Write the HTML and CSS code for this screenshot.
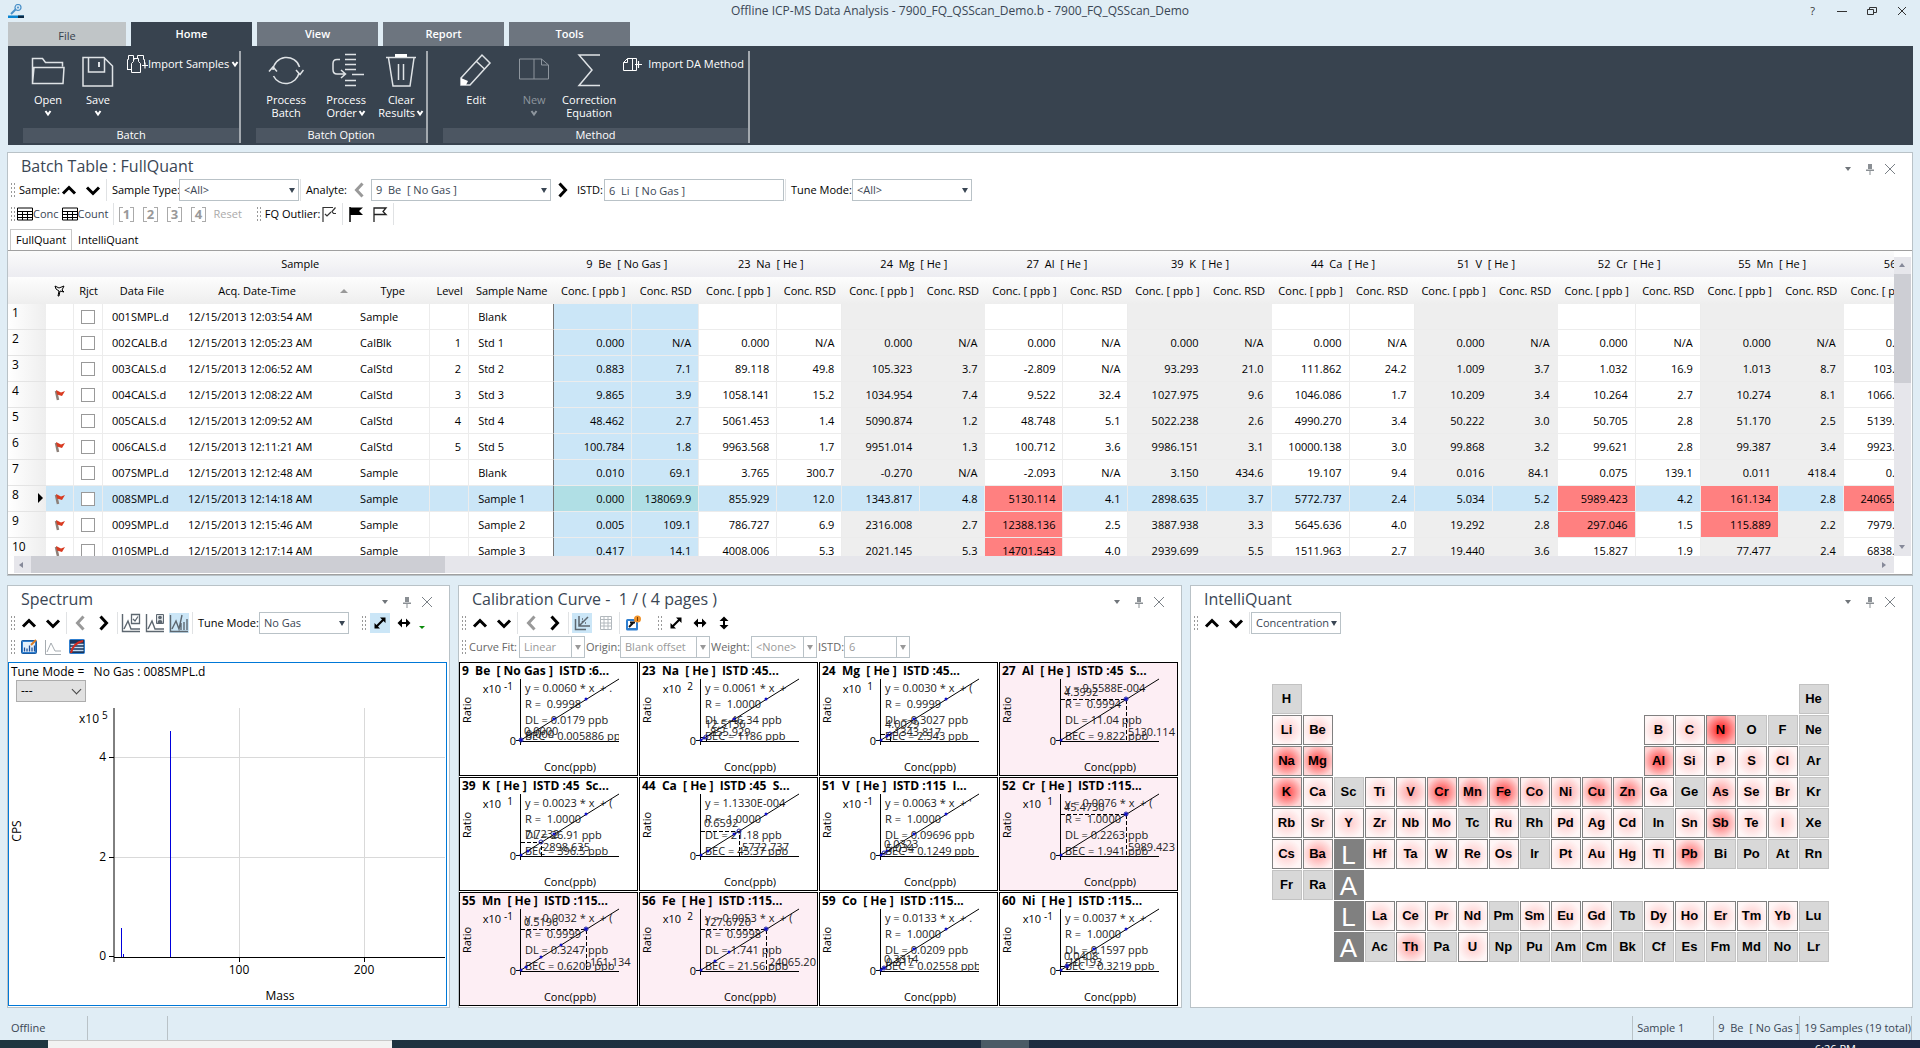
FILE: index.html
```html
<!DOCTYPE html>
<html lang="en">
<head>
  <meta charset="UTF-8">
  <title>Offline ICP-MS Data Analysis - 7900_FQ_QSScan_Demo.b</title>
  <link rel="stylesheet" href="styles.css">
</head>
<body>

<svg class="sprite" aria-hidden="true">
  <symbol id="up" viewBox="0 0 16 16"><path d="M2 11.5 8 5.5l6 6" fill="none" stroke="currentColor" stroke-width="3"/></symbol>
  <symbol id="down" viewBox="0 0 16 16"><path d="M2 5.5l6 6 6-6" fill="none" stroke="currentColor" stroke-width="3"/></symbol>
  <symbol id="left" viewBox="0 0 16 16"><path d="M11.500 1.500 5.500 8l6 6.500" fill="none" stroke="currentColor" stroke-width="3"/></symbol>
  <symbol id="right" viewBox="0 0 16 16"><path d="M4.500 1.500 10.500 8l-6 6.500" fill="none" stroke="currentColor" stroke-width="3"/></symbol>
  <symbol id="chev" viewBox="0 0 8 8"><path d="M1.500 2 4 5.500 6.500 2" fill="none" stroke="currentColor" stroke-width="2"/></symbol>
  <symbol id="pin" viewBox="0 0 10 12"><path d="M3 1h4v5H3zM1 6.500h8v1.500H1zM4.500 8h1v4h-1z" fill="#8a8f94"/></symbol>
  <symbol id="close" viewBox="0 0 12 12"><path d="M1 1l10 10M11 1 1 11" fill="none" stroke="#7a8086"/></symbol>
  <symbol id="tri" viewBox="0 0 8 6"><path d="M1 1h6L4 5z" fill="#70757a"/></symbol>
  <symbol id="grid" viewBox="0 0 16 14"><path d="M.5 1h15v12H.5zM0 4.500h16M0 7.500h16M0 10.500h16M5.500 4v9M10.500 4v9" fill="none" stroke="currentColor"/></symbol>
  <symbol id="diag" viewBox="0 0 16 16"><path d="M8 2.500h5.500V8zM2.500 8v5.500H8z"/><path d="M4.500 11.500l7-7" stroke="#000" stroke-width="2.200"/></symbol>
  <symbol id="horz" viewBox="0 0 16 16"><path d="M6 3.500v9L1.500 8zM10 3.500v9L14.500 8z"/><path d="M4 8h8" stroke="#000" stroke-width="2"/></symbol>
  <symbol id="vert" viewBox="0 0 16 16"><path d="M3.500 6h9L8 1.500zM3.500 10h9L8 14.500z"/><path d="M8 4v8" stroke="#000" stroke-width="2"/></symbol>
  <symbol id="flag" viewBox="0 0 16 16"><path d="M2 16V2h12l-3 3.500 3 3H2" fill="none" stroke="#222" stroke-width="1.300"/></symbol>
  <symbol id="flagfull" viewBox="0 0 16 16"><path d="M2 1.500h13l-4 3.500 4 4H2z"/><path d="M2 16V1" stroke="#000" stroke-width="1.500"/></symbol>
  <symbol id="flagcheck" viewBox="0 0 16 16"><path d="M2 16V1.500h10M4 8l2 2 4-4M14.500 1.500l-3.500 4 1.500 2H15" fill="none" stroke="#333" stroke-width="1.200"/></symbol>
  <symbol id="redflag" viewBox="0 0 12 12"><path d="M2 2l2 9" stroke="#8c7f78" stroke-width="2.500"/><path d="M2 1l5 2.500L11 2 8 7 3 5.500z" fill="#d93a20"/></symbol>
  <symbol id="peakcheck" viewBox="0 0 20 20"><path d="M1.500 1v17.500H19M3 16l4-8 3 8h9" fill="none" stroke="#5d6770" stroke-width="1.400"/><path d="M10.500 1.500h8v9h-8zM12 6l2 2 3-4.500" fill="#fff" stroke="#5d6770" stroke-width="1.300"/></symbol>
  <symbol id="peakuser" viewBox="0 0 20 20"><path d="M1.500 1v17.500H19M3 16l4-8 3 8h9" fill="none" stroke="#5d6770" stroke-width="1.400"/><path d="M11.500 1.500h7v9h-7z" fill="#dfe3e6" stroke="#5d6770"/><circle cx="15" cy="4.500" r="1.800" fill="#5d6770"/><path d="M12.500 10q0-3 2.500-3t2.500 3z" fill="#5d6770"/></symbol>
  <symbol id="peakbars" viewBox="0 0 20 20"><path d="M1.500 2v16.500H19M3 16l4-8 3 8L13 2M12 17v-7M15 17V9M18 17V6" fill="none" stroke="#5d6770" stroke-width="1.400"/></symbol>
</svg>

<header class="titlebar">
  <svg class="app-icon" viewBox="0 0 16 15"><path d="M0 11.500h16v2.500H0z" fill="#0a85d1"/><path d="M10 11.500h6v2.500h-6z" fill="#0b2a45"/><path d="M3 10l5-5" stroke="#4a90c8" stroke-width="2"/><circle cx="10" cy="3.500" r="3" fill="#d5e8f5" stroke="#4a90c8" stroke-width="1.200"/><circle cx="10" cy="3.500" r="1" fill="#4a90c8"/></svg>
  <h1>Offline ICP-MS Data Analysis - 7900_FQ_QSScan_Demo.b - 7900_FQ_QSScan_Demo</h1>
  <div class="window-buttons">
    <button aria-label="Help">?</button>
    <button aria-label="Minimize"><svg viewBox="0 0 10 10"><path d="M0 5.500h10" stroke="#333"/></svg></button>
    <button aria-label="Restore"><svg viewBox="0 0 10 10"><path d="M.5 3.500h6v5h-6zM2.500 3.500v-2h7v5h-3" fill="none" stroke="#333"/></svg></button>
    <button aria-label="Close"><svg viewBox="0 0 10 10"><path d="M1 1l8 8M9 1 1 9" stroke="#333"/></svg></button>
  </div>
</header>

<nav class="ribbon-tabs">
  <button class="file">File</button>
  <button class="active">Home</button>
  <button>View</button>
  <button>Report</button>
  <button>Tools</button>
</nav>

<section class="ribbon">
  <div class="group">
    <div class="actions">
      <button class="big w50"><svg class="pic" viewBox="0 0 36 36"><path d="M2.500 32.500v-25h10l3 4h17v4M2.500 32.500l1.500-16h30l-1 16z" fill="none" stroke="#dfe3e6" stroke-width="1.500"/></svg><span>Open</span><svg class="chev"><use href="#chev"/></svg></button>
      <button class="big w50"><svg class="pic" viewBox="0 0 36 36"><path d="M3 6.500h21l8.500 8.500v20H3zM8.500 7v14h16V7" fill="none" stroke="#dfe3e6" stroke-width="1.500"/><path d="M19 11v5" stroke="#dfe3e6" stroke-width="2"/></svg><span>Save</span><svg class="chev"><use href="#chev"/></svg></button>
      <button class="small"><svg class="wide" viewBox="0 0 22 18"><path d="M1.500 14.500v-10h1v-4h5v4h1M5.500 17.500v-9l2-2v-3h5v3l2 2v9zM11.500 3.500v-3h6v4h1v5M1 14.500h4" fill="none" stroke="#fff"/><path d="M16 10.500h6M19 7.500v6" stroke="#fff" stroke-width="1.200"/></svg>Import Samples<svg class="chev"><use href="#chev"/></svg></button>
    </div>
    <div class="group-name">Batch</div>
  </div>
  <div class="group">
    <div class="actions">
      <button class="big w60"><svg class="pic" viewBox="0 0 36 36"><path d="M5 19A13.500 13 0 0 1 31.500 16M31 22A13.500 13 0 0 1 5.500 25" fill="none" stroke="#dfe3e6" stroke-width="1.500"/><path d="M1 20.500l4-4.500 4 4.500M28 19l4 4.500 3.500-4.500" fill="none" stroke="#dfe3e6" stroke-width="1.500"/></svg><span>Process<br>Batch</span></button>
      <button class="big w60"><svg class="pic" viewBox="0 0 36 36"><path d="M17 3.500h11M17 8.500h11M17 13.500h11M17 18.500h11M24 23.500h12M17 29.500h11M17 34.500h11" stroke="#dfe3e6" stroke-width="1.500"/><path d="M12 8.500H9q-4 0-4 4v6q0 4.500 4 4.500h8M13 19l4.500 4-4.500 4" fill="none" stroke="#dfe3e6" stroke-width="1.500"/></svg><span>Process<br>Order<svg class="chev"><use href="#chev"/></svg></span></button>
      <button class="big w50"><svg class="pic" viewBox="0 0 36 36"><path d="M3 6.500h30M5.500 7l4.500 28h17L31 7M15.500 13v16M20.500 13v16" fill="none" stroke="#dfe3e6" stroke-width="1.500"/><path d="M12 3h12v3H12z" fill="#fff"/></svg><span>Clear<br>Results<svg class="chev"><use href="#chev"/></svg></span></button>
    </div>
    <div class="group-name">Batch Option</div>
  </div>
  <div class="group">
    <div class="actions">
      <button class="big w66"><svg class="pic" viewBox="0 0 36 36"><path d="M3 27 24 4l8 8-20 22H3zM18 10l8.500 8" fill="none" stroke="#dfe3e6" stroke-width="1.500"/><path d="M3 27l7 3-2 4H3z" fill="#fff"/></svg><span>Edit</span></button>
      <button class="big w50" disabled><svg class="pic" viewBox="0 0 36 36"><path d="M3.500 8h22l7 6v14h-29zM18 8v20M25.500 8v6h7" fill="none" stroke="#8e969e"/></svg><span>New</span><svg class="chev"><use href="#chev"/></svg></button>
      <button class="big w60"><svg class="pic" viewBox="0 0 36 36"><path d="M29 4H8l13 15L8 34.500h21" fill="none" stroke="#dfe3e6" stroke-width="1.500"/></svg><span>Correction<br>Equation</span></button>
      <button class="small"><svg class="wide" viewBox="0 0 22 18"><path d="M5.500 3.500h9v12h-13v-8zM10.500 3v12M5.500 3.500v4h-4" fill="none" stroke="#fff"/><path d="M13 9.500h7M16.500 6v7" stroke="#fff" stroke-width="1.200"/></svg><span>Import DA Method</span></button>
    </div>
    <div class="group-name">Method</div>
  </div>
</section>

<main>
  <section class="panel batch">
    <div class="panel-head">
      <h2>Batch Table : FullQuant</h2>
      <div class="panel-tools"><svg class="t"><use href="#tri"/></svg><svg class="p"><use href="#pin"/></svg><svg class="x"><use href="#close"/></svg></div>
    </div>
    <div class="toolbar">
      <i class="grip"></i><span class="name">Sample:</span>
      <button class="icon" aria-label="Previous sample"><svg><use href="#up"/></svg></button>
      <button class="icon" aria-label="Next sample"><svg><use href="#down"/></svg></button>
      <i class="sep"></i>
      <label for="stype" class="w66">Sample Type:</label>
      <span class="drop w120"><select id="stype"><option>&lt;All&gt;</option></select></span>
      <i class="sep"></i>
      <label for="analyte" class="w40">Analyte:</label>
      <button class="icon dim" aria-label="Previous analyte"><svg><use href="#left"/></svg></button>
      <span class="drop w180"><select id="analyte"><option>9&nbsp; Be&nbsp; [ No Gas ]</option></select></span>
      <button class="icon" aria-label="Next analyte"><svg><use href="#right"/></svg></button>
      <label for="istd" class="w26">ISTD:</label>
      <input id="istd" class="w180" type="text" value="6  Li  [ No Gas ]">
      <i class="sep"></i>
      <label for="tmode" class="w60">Tune Mode:</label>
      <span class="drop w120"><select id="tmode"><option>&lt;All&gt;</option></select></span>
    </div>
    <div class="toolbar">
      <i class="grip"></i>
      <button class="txt"><svg><use href="#grid"/></svg>Conc</button>
      <button class="txt"><svg><use href="#grid"/></svg>Count</button>
      <i class="sep"></i>
      <button class="icon num" disabled>1</button>
      <button class="icon num" disabled>2</button>
      <button class="icon num" disabled>3</button>
      <button class="icon num" disabled>4</button>
      <button class="txt reset" disabled>Reset</button>
      <i class="grip"></i><span class="name">FQ Outlier:</span>
      <button class="icon" aria-label="Outlier setup"><svg><use href="#flagcheck"/></svg></button>
      <i class="sep"></i>
      <button class="icon" aria-label="Next outlier"><svg><use href="#flagfull"/></svg></button>
      <button class="icon" aria-label="Clear outlier"><svg><use href="#flag"/></svg></button>
      <i class="sep"></i>
    </div>
    <div class="tabs"><button class="active">FullQuant</button><button>IntelliQuant</button></div>
    <div class="grid-wrap">
      <div class="grid-view"><table id="batch"></table></div>
      <div class="vscroll"><i class="arr up"></i><i class="thumb"></i><i class="arr down"></i></div>
      <div class="hscroll"><i class="arr left"></i><i class="thumb"></i><i class="arr right"></i></div>
    </div>
  </section>

  <div class="bottom">
    <section class="panel">
      <div class="panel-head">
        <h2>Spectrum</h2>
        <div class="panel-tools"><svg class="t"><use href="#tri"/></svg><svg class="p"><use href="#pin"/></svg><svg class="x"><use href="#close"/></svg></div>
      </div>
      <div class="toolbar">
        <i class="grip"></i>
        <button class="icon" aria-label="Up"><svg><use href="#up"/></svg></button>
        <button class="icon" aria-label="Down"><svg><use href="#down"/></svg></button>
        <i class="sep"></i>
        <button class="icon dim" aria-label="Previous"><svg><use href="#left"/></svg></button>
        <button class="icon" aria-label="Next"><svg><use href="#right"/></svg></button>
        <i class="sep"></i>
        <button class="icon lg" aria-label="Peak check"><svg><use href="#peakcheck"/></svg></button>
        <button class="icon lg" aria-label="Peak label"><svg><use href="#peakuser"/></svg></button>
        <button class="icon lg on" aria-label="Bars"><svg><use href="#peakbars"/></svg></button>
        <i class="sep"></i>
        <label for="smode" class="w60">Tune Mode:</label>
        <span class="drop w90"><select id="smode"><option>No Gas</option></select></span>
        <i class="grip far"></i>
        <button class="icon on" aria-label="Fit both"><svg><use href="#diag"/></svg></button>
        <button class="icon" aria-label="Fit width"><svg><use href="#horz"/></svg></button>
        <i class="more"></i>
      </div>
      <div class="toolbar">
        <i class="grip"></i>
        <button class="icon" aria-label="Edit spectrum"><svg viewBox="0 0 16 16"><rect x=".5" y="1.500" width="15" height="13" rx="1" fill="#2f7fd0" stroke="#1b5aa0"/><path d="M2 3h12v10H2z" fill="#e4f0fb"/><path d="M3.500 12.500v-4M6 12.500v-3M8.500 12.500v-6M11 12.500v-4M13.500 12.500v-6" stroke="#1b4f9a" stroke-width="1.300"/><path d="M10 6l5-5" stroke="#d87b26" stroke-width="2"/></svg></button>
        <button class="icon" aria-label="Peak"><svg viewBox="0 0 16 16"><path d="M.5 1v14.500H16M2 13l4-9 4 8h6" fill="none" stroke="#a5abb0"/></svg></button>
        <button class="icon" aria-label="Overlay"><svg viewBox="0 0 16 16"><rect x=".5" y=".5" width="15" height="14" rx="1" fill="#16365f" stroke="#2f7fd0"/><path d="M1.500 5.500h13M1.500 8.500h13M1.500 11.500h13" stroke="#c8dcf0" stroke-width="1.500"/><path d="M2 14Q4 4 14 2" fill="none" stroke="#d32a1e" stroke-width="2"/></svg></button>
      </div>
      <div class="chart">
        <p>Tune Mode =   No Gas : 008SMPL.d</p>
        <span class="pick"><select aria-label="Isotope"><option>---</option></select></span>
        <svg class="plot" viewBox="9 703 437 302" preserveAspectRatio="xMinYMin meet">
          <path d="M114.500 758.500H445M114.500 858.500H445M239.500 709V962M364.500 709V962" stroke="#d9d9d9"/>
          <path d="M114 709v254M109 758.500h5M109 858.500h5M109 957.500h5M239.500 958v5M364.500 958v5M114 958.500h331" stroke="#000" fill="none"/>
          <path d="M121.500 929v29M123.500 955v3M170.500 732v226" stroke="#00d"/>
          <text x="79" y="724">x10</text><text class="exp" x="102" y="720">5</text>
          <g text-anchor="end"><text x="106" y="762">4</text><text x="106" y="862">2</text><text x="106" y="961">0</text></g>
          <g text-anchor="middle"><text x="239" y="975">100</text><text x="364" y="975">200</text><text x="280" y="1001">Mass</text><text transform="translate(21 832) rotate(-90)">CPS</text></g>
        </svg>
      </div>
    </section>

    <section class="panel">
      <div class="panel-head">
        <h2>Calibration Curve -  1 / ( 4 pages )</h2>
        <div class="panel-tools"><svg class="t"><use href="#tri"/></svg><svg class="p"><use href="#pin"/></svg><svg class="x"><use href="#close"/></svg></div>
      </div>
      <div class="toolbar">
        <i class="grip"></i>
        <button class="icon" aria-label="Up"><svg><use href="#up"/></svg></button>
        <button class="icon" aria-label="Down"><svg><use href="#down"/></svg></button>
        <i class="sep"></i>
        <button class="icon dim" aria-label="Previous page"><svg><use href="#left"/></svg></button>
        <button class="icon" aria-label="Next page"><svg><use href="#right"/></svg></button>
        <i class="sep"></i>
        <button class="icon on" aria-label="Curve"><svg viewBox="0 0 16 16"><path d="M1.500 4v10.500H12M5 1v10h11M5 11l9-9M8 4h1M11 8h1M8 7l1-1" fill="none" stroke="#5d6770" stroke-width="1.500"/></svg></button>
        <button class="icon" aria-label="Table"><svg viewBox="0 0 16 16"><path d="M2.500 1.500h11v13h-11zM2.500 4.500h11M2.500 8h11M2.500 11h11M6 1.500v13M10 1.500v13" fill="none" stroke="#b2b8bd"/></svg></button>
        <i class="sep"></i>
        <button class="icon" aria-label="Apply"><svg viewBox="0 0 16 16"><rect x="1" y="4" width="12" height="11.500" rx="1.500" fill="#2f7fd0"/><path d="M3 6h8v7H3z" fill="#fff"/><path d="M4 12l5-5M5 7.500h5" stroke="#111" stroke-width="1.800"/><circle cx="12.500" cy="4" r="3.500" fill="#f0932b"/><path d="M12.500 2v4" stroke="#7a3c00"/></svg></button>
        <i class="grip far"></i>
        <button class="icon" aria-label="Fit both"><svg><use href="#diag"/></svg></button>
        <button class="icon" aria-label="Fit width"><svg><use href="#horz"/></svg></button>
        <button class="icon" aria-label="Fit height"><svg><use href="#vert"/></svg></button>
      </div>
      <div class="toolbar off">
        <i class="grip"></i>
        <label for="fit" class="w50">Curve Fit:</label><span class="drop w66"><select id="fit" disabled><option>Linear</option></select></span>
        <label for="origin" class="w34">Origin:</label><span class="drop w90"><select id="origin" disabled><option>Blank offset</option></select></span>
        <label for="weight" class="w40">Weight:</label><span class="drop w66"><select id="weight" disabled><option>&lt;None&gt;</option></select></span>
        <label for="cistd" class="w26">ISTD:</label><span class="drop w66"><select id="cistd" disabled><option>6</option></select></span>
      </div>
      <div class="tiles" id="tiles"></div>
    </section>

    <section class="panel">
      <div class="panel-head">
        <h2>IntelliQuant</h2>
        <div class="panel-tools"><svg class="t"><use href="#tri"/></svg><svg class="p"><use href="#pin"/></svg><svg class="x"><use href="#close"/></svg></div>
      </div>
      <div class="toolbar">
        <i class="grip"></i>
        <button class="icon" aria-label="Up"><svg><use href="#up"/></svg></button>
        <button class="icon" aria-label="Down"><svg><use href="#down"/></svg></button>
        <i class="sep"></i>
        <span class="drop w90"><select aria-label="Value shown"><option>Concentration</option></select></span>
      </div>
      <div class="periodic" id="periodic"></div>
    </section>
  </div>
</main>

<footer class="status">
  <span class="cell first">Offline</span><span class="cell gap"></span>
  <span class="cell s1">Sample 1</span><span class="cell s2">9  Be  [ No Gas ]</span><span class="cell s3">19 Samples (19 total)</span>
</footer>
<div class="taskbar"><i class="search"></i><i class="app"></i><span>6:26 PM</span></div>

<script src="script.js"></script>
</body>
</html>
```
FILE: styles.css
```css
* { box-sizing: border-box; }

body {
  margin: 0;
  min-height: 100vh;
  display: flex;
  flex-direction: column;
  background: #e0edf5;
  color: #000;
  font-family: "Open Sans", "Noto Sans", sans-serif;
  font-size: 11px;
  line-height: 14px;
}

button, select, input {
  font: inherit;
  color: inherit;
  margin: 0;
  padding: 0;
  border: 0;
  background: none;
}

h1, h2, p { margin: 0; font-weight: normal; }
.sprite { position: absolute; width: 0; height: 0; }

/* window title */
.titlebar {
  display: grid;
  grid-template-columns: 1fr auto 1fr;
  align-items: center;
  height: 22px;
  padding: 2px 12px;
}
.titlebar h1 { font-size: 12px; color: #3a4654; }
.app-icon { width: 16px; height: 15px; margin-left: -4px; }
.window-buttons { display: flex; justify-content: flex-end; gap: 19px; color: #333; }
.window-buttons button { width: 11px; height: 14px; }
.window-buttons svg { width: 10px; height: 10px; display: block; }

/* ribbon */
.ribbon-tabs { display: flex; gap: 5px; padding: 0 8px; }
.ribbon-tabs button {
  width: 121px;
  height: 24px;
  background: #6d757f;
  color: #fff;
  font-weight: 600;
}
.ribbon-tabs .file { width: 118px; padding-top: 3px; background: #c0c5c7; color: #36414d; font-weight: normal; }
.ribbon-tabs .active { background: #38434f; }

.ribbon {
  display: flex;
  height: 99px;
  margin: 0 7px 0 8px;
  padding: 5px 0 2px;
  background: #38434f;
  color: #fff;
}
.group {
  display: flex;
  flex-direction: column;
  justify-content: space-between;
  margin-left: 15px;
  border-right: 2px solid #a3a9af;
}
.actions { display: flex; align-items: flex-start; }
.group-name { height: 15px; background: #4c5662; text-align: center; }
.big {
  display: flex;
  flex-direction: column;
  align-items: center;
  height: 76px;
  line-height: 13px;
  white-space: nowrap;
}
.pic { flex: none; width: 36px; height: 36px; margin-bottom: 6px; }
.big:disabled { color: #8e969e; }
.chev { width: 8px; height: 8px; margin-left: 1px; }
.big > .chev { margin: 3px 0 0; }
.small { display: flex; align-items: center; height: 24px; padding: 2px 0 0 3px; }
.small .wide { width: 22px; height: 18px; }
.small .chev { margin-left: 2px; }
.small span { margin: 0 4px; }

.w26 { width: 26px; }
.w34 { width: 34px; }
.w40 { width: 40px; }
.w50 { width: 50px; }
.w60 { width: 60px; }
.w66 { width: 66px; }
.w90 { width: 90px; }
.w120 { width: 120px; }
.w180 { width: 180px; }

/* panels */
main { flex: 1; display: flex; flex-direction: column; gap: 9px; padding: 7px 7px 8px; }
.panel {
  display: flex;
  flex-direction: column;
  min-width: 0;
  background: #fff;
  border: 1px solid #b9c2c7;
}
.panel-head { display: flex; justify-content: space-between; height: 26px; padding: 0 16px 0 13px; }
.panel-head h2 { font-size: 16px; line-height: 26px; color: #3a4654; white-space: pre; }
.panel-tools { display: flex; align-items: center; gap: 13px; padding-top: 6px; }
.panel-tools svg { height: 12px; }
.panel-tools .t { width: 8px; height: 6px; }
.panel-tools .p { width: 10px; }
.panel-tools .x { width: 12px; margin-left: -4px; }

.toolbar {
  display: flex;
  align-items: center;
  height: 22px;
  margin-bottom: 2px;
  padding-left: 2px;
  white-space: nowrap;
}
.toolbar .name { margin: 0 -3px 0 2px; }
.toolbar label { margin: 0 1px 0 4px; }
.icon + label { margin-left: 2px; }
.toolbar.off label { margin: 0 0 0 1px; }
.off { color: #666; }
.grip {
  width: 6px;
  height: 16px;
  flex: none;
  margin-right: 1px;
  background: radial-gradient(circle, #999 1px, transparent 1px) 0 0 / 3px 4px;
}
.grip.far { margin-left: 12px; }
.sep { width: 1px; height: 22px; margin: 0 1px; background: #e0e2e4; }
.icon {
  width: 24px;
  height: 22px;
  display: flex;
  align-items: center;
  justify-content: center;
}
.icon svg { width: 16px; height: 16px; }
.icon.lg svg { width: 20px; height: 20px; }
.icon.dim { color: #999; }
.icon.on { width: 20px; height: 20px; margin: 0 2px; background: #cbe6f7; }
.num { color: #999; font-size: 13px; font-weight: bold; }
.num::before, .num::after { content: ""; width: 3px; height: 13px; border: 1px solid #aaa; }
.num::before { border-right: 0; }
.num::after { border-left: 0; }
.txt { display: flex; align-items: center; margin-right: 3px; color: #3a4654; }
.txt svg { width: 16px; height: 14px; color: #000; }
.reset { margin: 0 14px 0 3px; color: #aaa; }
.more { width: 0; height: 0; margin: 12px 0 0 3px; border: 3px solid transparent; border-top-color: #0a8a0a; }

.toolbar input, .drop select {
  height: 22px;
  padding: 0 4px;
  border: 1px solid #b9c2c7;
  background: #fff;
  color: #3a4654;
  appearance: none;
  border-radius: 0;
}
.drop { position: relative; }
.drop select { width: 100%; display: block; opacity: 1; }
.drop::after {
  content: "";
  position: absolute;
  right: 4px;
  top: 9px;
  border: 3px solid transparent;
  border-top: 5px solid #3a4654;
  border-bottom: 0;
  pointer-events: none;
}
.off .drop select { color: #999; }
.off .drop::after { border-top-color: #999; }
.off .drop::before {
  content: "";
  position: absolute;
  right: 13px;
  top: 1px;
  bottom: 1px;
  border-left: 1px solid #b9c2c7;
}

/* batch table */
.tabs { display: flex; margin-top: 2px; padding-left: 2px; border-bottom: 1px solid #a0a0a0; }
.tabs button { height: 21px; padding: 0 5px; border: 1px solid transparent; border-bottom: 0; }
.tabs .active { border-color: #c8c8c8; }
.grid-wrap {
  display: grid;
  grid-template-columns: minmax(0, 1fr) 17px;
  grid-template-rows: 305px 17px;
  padding: 0 1px 1px 0;
  border-bottom: 1px solid #a0a0a0;
}
.grid-view { overflow: hidden; }
table { width: 1979px; table-layout: fixed; border-collapse: separate; border-spacing: 0; }
tr { height: 26px; }
th, td { padding: 0 7px; white-space: pre; overflow: hidden; }
thead th { padding: 0; font-weight: normal; text-align: center; background: linear-gradient(#fbfbfb, #ececf1); }
thead tr + tr { height: 27px; }
thead tr + tr th { background: linear-gradient(#fdfdfd, #eee); }
thead .sorted::after {
  content: "";
  display: inline-block;
  margin: 0 0 2px 44px;
  border: 4px solid transparent;
  border-top: 0;
  border-bottom-color: #999;
}
thead .sorted { padding-left: 30px; }
thead svg, td svg { display: block; width: 12px; height: 12px; margin: auto; }
tbody th {
  padding: 2px 2px 0 4px;
  font-size: 12px;
  font-weight: normal;
  text-align: left;
  vertical-align: top;
  background: linear-gradient(90deg, #fff, #eee);
  border-bottom: 1px solid #e4e4e4;
}
tbody th i {
  float: right;
  margin: 5px 1px 0 0;
  border: 5px solid transparent;
  border-left-color: #000;
  border-right: 0;
}
td { border-right: 1px solid #ececec; border-bottom: 1px solid #ececec; }
td.flag, td.rjct { padding: 0; text-align: center; }
td.file { padding-left: 9px; border-right: 0; }
td.date { padding-left: 7px; border-right: 0; }
td.type { padding-left: 5px; }
td.name { padding-left: 9px; border-right-color: #777; }
td.r { text-align: right; }
td.alt { background: #eee; border-right-color: #eee; }
td.sel, .current td { background: #cbe6f7; }
.current td.sel { background: #b0dfe5; }
td.bad, .current td.bad { background: #ff8080; }
td input[type=checkbox] {
  appearance: none;
  display: block;
  width: 14px;
  height: 14px;
  margin: auto;
  border: 1px solid #999;
  background: #fff;
}

.vscroll, .hscroll { display: flex; align-items: center; background: #e6e6eb; }
.vscroll { flex-direction: column; margin-top: 6px; }
.hscroll { margin-left: 6px; }
.thumb { background: #cdced4; }
.vscroll .thumb { width: 17px; flex: 0 0 109px; margin-bottom: auto; }
.hscroll .thumb { height: 17px; flex: 0 0 22%; margin-right: auto; }
.arr { flex: none; width: 17px; height: 17px; padding: 6px 5px; }
.arr::before { content: ""; display: block; width: 0; height: 0; border: 3px solid transparent; }
.arr.up::before { border-top: 0; border-bottom: 4px solid #868999; }
.arr.down::before { border-bottom: 0; border-top: 4px solid #868999; }
.arr.left::before { border-left: 0; border-right: 4px solid #868999; }
.arr.right::before { border-right: 0; border-left: 4px solid #868999; }

/* lower panels */
.bottom {
  flex: 1;
  display: grid;
  grid-template-columns: 443fr 724fr 723fr;
  gap: 8px;
}
.chart {
  flex: 1;
  display: flex;
  flex-direction: column;
  align-items: flex-start;
  margin: 2px 2px 1px 0;
  border: 1px solid #0078d7;
}
.toolbar + .chart, .toolbar + .tiles { margin-top: 2px; }
.chart p { padding: 2px 2px 0; font-size: 12px; white-space: pre; }
.pick { position: relative; width: 70px; margin: 1px 0 0 7px; }
.pick select {
  display: block;
  width: 100%;
  height: 22px;
  padding: 0 4px;
  font-size: 12px;
  background: #e1e1e1;
  border: 1px solid #adadad;
  border-radius: 0;
  appearance: none;
}
.pick::after {
  content: "";
  position: absolute;
  right: 6px;
  top: 6px;
  width: 6px;
  height: 6px;
  border: solid #444;
  border-width: 0 1px 1px 0;
  transform: rotate(45deg);
  pointer-events: none;
}
.plot { flex: 1; width: 100%; min-height: 0; font-size: 12px; }
.plot .exp { font-size: 10px; }

.tiles {
  flex: 1;
  display: grid;
  grid-template-columns: repeat(4, minmax(0, 1fr));
  grid-auto-rows: minmax(0, 1fr);
  gap: 1px;
  margin: 2px 3px 1px 0;
}
.tile { border: 1px solid #000; }
.tile.pink { background: #fdeef4; }
.tile svg { display: block; width: 100%; height: 100%; overflow: hidden; }
.tile text { white-space: pre; }
.tile .head { font-size: 12px; font-weight: bold; }
.tile .exp { font-size: 10px; }

.periodic {
  flex: 1;
  display: grid;
  grid-template-columns: repeat(18, 30px);
  grid-template-rows: repeat(9, 30px);
  gap: 1px;
  place-content: center;
  padding: 3px 3px 0 0;
  font: bold 13px/28px "Liberation Sans", Arial, sans-serif;
  text-align: center;
}
.el { background: #d8d8d8; border: 1px solid #c2c2c2; }
.series { background: #808080; color: #fff; font-size: 26px; font-weight: normal; line-height: 32px; }
.h1, .h2, .h3, .h4, .h5 { border-color: #808080; }
.h1 { background: radial-gradient(#ffcaca, #fff6f6 75%); }
.h2 { background: radial-gradient(#ff9c9c, #fff0f0 80%); }
.h3 { background: radial-gradient(#ff6c6c, #ffe6e6 80%); }
.h4 { background: radial-gradient(#ff4040, #ffd6d6 80%); }
.h5 { background: radial-gradient(#ff1414, #ffb4b4 80%); }

/* status */
.status { display: flex; height: 24px; padding: 0 8px 0 7px; color: #3a4654; }
.cell { padding: 5px 0 5px 4px; border-right: 1px solid #b9c2c7; white-space: pre; }
.first { width: 81px; }
.gap { width: 80px; }
.s1 { width: 82px; margin-left: auto; border-left: 1px solid #b9c2c7; }
.s2 { width: 86px; }

.taskbar { position: relative; display: flex; height: 8px; overflow: hidden; background: linear-gradient(90deg, #1f3640, #1b2440); color: #fff; }
.taskbar .search { width: 344px; margin-left: 48px; background: #f2f2f2; border-top: 1px solid #c8c8c8; }
.taskbar .app { width: 48px; margin-left: 589px; background: #4b5b66; }
.taskbar span { margin: 2px 64px 0 auto; }
```
FILE: script.js
```js
// ---- batch table ----
const isotopes = ["9  Be  [ No Gas ]", "23  Na  [ He ]", "24  Mg  [ He ]", "27  Al  [ He ]", "39  K  [ He ]",
  "44  Ca  [ He ]", "51  V  [ He ]", "52  Cr  [ He ]", "55  Mn  [ He ]", "56  Fe  [ He ]"];

// flag, file, time, type, level, name, then conc/RSD pairs (! marks an outlier)
const rows = [
  ["", "001SMPL.d", "12:03:54", "Sample", "", "Blank", ""],
  ["", "002CALB.d", "12:05:23", "CalBlk", "1", "Std 1", "0.000 N/A 0.000 N/A 0.000 N/A 0.000 N/A 0.000 N/A 0.000 N/A 0.000 N/A 0.000 N/A 0.000 N/A 0.000"],
  ["", "003CALS.d", "12:06:52", "CalStd", "2", "Std 2", "0.883 7.1 89.118 49.8 105.323 3.7 -2.809 N/A 93.293 21.0 111.862 24.2 1.009 3.7 1.032 16.9 1.013 8.7 103.000"],
  ["f", "004CALS.d", "12:08:22", "CalStd", "3", "Std 3", "9.865 3.9 1058.141 15.2 1034.954 7.4 9.522 32.4 1027.975 9.6 1046.086 1.7 10.209 3.4 10.264 2.7 10.274 8.1 1066.000"],
  ["", "005CALS.d", "12:09:52", "CalStd", "4", "Std 4", "48.462 2.7 5061.453 1.4 5090.874 1.2 48.748 5.1 5022.238 2.6 4990.270 3.4 50.222 3.0 50.705 2.8 51.170 2.5 5139.000"],
  ["f", "006CALS.d", "12:11:21", "CalStd", "5", "Std 5", "100.784 1.8 9963.568 1.7 9951.014 1.3 100.712 3.6 9986.151 3.1 10000.138 3.0 99.868 3.2 99.621 2.8 99.387 3.4 9923.000"],
  ["", "007SMPL.d", "12:12:48", "Sample", "", "Blank", "0.010 69.1 3.765 300.7 -0.270 N/A -2.093 N/A 3.150 434.6 19.107 9.4 0.016 84.1 0.075 139.1 0.011 418.4 0.000"],
  ["f", "008SMPL.d", "12:14:18", "Sample", "", "Sample 1", "0.000 138069.9 855.929 12.0 1343.817 4.8 5130.114! 4.1 2898.635 3.7 5772.737 2.4 5.034 5.2 5989.423! 4.2 161.134! 2.8 24065.200!"],
  ["f", "009SMPL.d", "12:15:46", "Sample", "", "Sample 2", "0.005 109.1 786.727 6.9 2316.008 2.7 12388.136! 2.5 3887.938 3.3 5645.636 4.0 19.292 2.8 297.046! 1.5 115.889! 2.2 7979.000"],
  ["f", "010SMPL.d", "12:17:14", "Sample", "", "Sample 3", "0.417 14.1 4008.006 5.3 2021.145 5.3 14701.543! 4.0 2939.699 5.5 1511.963 2.7 19.440 3.6 15.827 1.9 77.477 2.4 6838.000"]
];

const widths = [38, 28, 29, 78, 174, 75, 39, 85, 78, 67];
for (let i = 1; i < isotopes.length; i++) widths.push(78, 65);

let html = "<colgroup>" + widths.map(w => `<col style="width:${w}px">`).join("") + "</colgroup><thead><tr><th></th><th colspan='7'>Sample</th>";
html += isotopes.map(n => `<th colspan="2">${n}</th>`).join("");
html += `</tr><tr><th></th><th><svg viewBox="0 0 12 12"><path d="M1 1l4 2 5-2-2 4 2 2-4-1-1 5-1 0 1-5-3-2z" fill="none" stroke="#000"/></svg></th><th>Rjct</th><th>Data File</th><th class="sorted">Acq. Date-Time</th><th>Type</th><th>Level</th><th>Sample Name</th>`;
html += isotopes.map(() => "<th>Conc. [ ppb ]</th><th>Conc. RSD</th>").join("") + "</tr></thead><tbody>";

rows.forEach((r, n) => {
  const current = n === 7;
  const vals = r[6].split(" ");
  html += `<tr class="${current ? "current" : ""}"><th>${n + 1}${current ? "<i></i>" : ""}</th>`;
  html += `<td class="flag">${r[0] ? '<svg><use href="#redflag"/></svg>' : ""}</td>`;
  html += `<td class="rjct"><input type="checkbox" aria-label="Reject ${r[1]}"></td>`;
  html += `<td class="file">${r[1]}</td><td class="date">12/15/2013 ${r[2]} AM</td><td class="type">${r[3]}</td><td class="r">${r[4]}</td><td class="name">${r[5]}</td>`;
  for (let i = 0; i < 20; i++) {
    const v = vals[i] || "";
    const el = i >> 1;
    let cls = "r";
    if (el === 0) cls += " sel";
    else if (el % 2 === 0) cls += " alt";
    if (v.endsWith("!")) cls += " bad";
    html += `<td class="${cls}">${v.replace("!", "")}</td>`;
  }
  html += "</tr>";
});
document.getElementById("batch").innerHTML = html + "</tbody>";

// ---- calibration curves ----
// q: fit results, m: [text, x, y] sample readouts, at: sample position on the curve, p: standards
const curves = [
  { t: "9  Be  [ No Gas ]  ISTD :6...", e: "-1", q: ["y = 0.0060 * x  + .", "R =  0.9998", "DL = 0.0179 ppb", "BEC = 0.005886 ppb"], m: [["0.0000", 65, 73], ["0.000", 67, 76]], at: 62, p: [62, 95, 127] },
  { t: "23  Na  [ He ]  ISTD :45...", e: "2", q: ["y = 0.0061 * x  +", "R =  1.0000", "DL = 46.34 ppb", "BEC = 1186 ppb"], m: [["12.5136", 66, 66], ["855.929", 71, 74]], at: 67, p: [62, 65, 95, 127] },
  { t: "24  Mg  [ He ]  ISTD :45...", e: "1", q: ["y = 0.0030 * x  + (", "R =  0.9999", "DL = 0.3027 ppb", "BEC = 2.543 ppb"], m: [["4.0029", 66, 66], ["1343.817", 75, 74]], at: 71, p: [62, 68, 95, 127] },
  { t: "27  Al  [ He ]  ISTD :45  S...", e: "", pink: 1, q: ["y = 9.5588E-004", "R =  0.9994", "DL = 11.04 ppb", "BEC = 9.822 ppb"], m: [["4.3992", 65, 34], ["5130.114", 129, 74]], at: 127, p: [62, 127] },
  { t: "39  K  [ He ]  ISTD :45  Sc...", e: "1", q: ["y = 0.0023 * x  + (", "R =  1.0000", "DL = 26.91 ppb", "BEC = 396.5 ppb"], m: [["7.7232", 66, 61], ["2898.635", 84, 74]], at: 82, p: [62, 69, 95, 127] },
  { t: "44  Ca  [ He ]  ISTD :45  S...", e: "", q: ["y = 1.1330E-004", "R =  1.0000", "DL = 21.18 ppb", "BEC = 45.37 ppb"], m: [["0.6592", 65, 50], ["5772.737", 103, 74]], at: 100, p: [62, 69, 95, 127] },
  { t: "51  V  [ He ]  ISTD :115  I...", e: "-1", q: ["y = 0.0063 * x  + '", "R =  1.0000", "DL = 0.09696 ppb", "BEC = 0.1249 ppb"], m: [["0.0323", 65, 71], ["5.034", 67, 75]], at: 65, p: [62, 68, 95, 127] },
  { t: "52  Cr  [ He ]  ISTD :115...", e: "1", pink: 1, q: ["y = 0.0076 * x  + (", "R =  1.0000", "DL = 0.2263 ppb", "BEC = 1.941 ppb"], m: [["45.4730", 65, 34], ["5989.423", 129, 74]], at: 127, p: [62, 127] },
  { t: "55  Mn  [ He ]  ISTD :115...", e: "-1", pink: 1, q: ["y = 0.0032 * x  + (", "R =  0.9999", "DL = 0.3247 ppb", "BEC = 0.6209 ppb"], m: [["0.5196", 65, 34], ["161.134", 131, 74]], at: 127, p: [62, 67, 82, 102, 127] },
  { t: "56  Fe  [ He ]  ISTD :115...", e: "2", pink: 1, q: ["y = 0.0053 * x  + (", "R =  0.9998", "DL = 1.741 ppb", "BEC = 21.56 ppb"], m: [["127.6720", 65, 34], ["24065.20", 130, 74]], at: 127, p: [62, 76, 90, 127] },
  { t: "59  Co  [ He ]  ISTD :115...", e: "", q: ["y = 0.0133 * x  + .", "R =  1.0000", "DL = 0.0209 ppb", "BEC = 0.02558 ppb"], m: [["0.3314", 65, 71], ["0.817", 67, 74]], at: 65, p: [62, 65, 95, 127] },
  { t: "60  Ni  [ He ]  ISTD :115...", e: "-1", q: ["y = 0.0037 * x  + .", "R =  1.0000", "DL = 0.1597 ppb", "BEC = 0.3219 ppb"], m: [["0.0408", 65, 68], ["10.193", 69, 74]], at: 68, p: [62, 68, 95, 127] }
];

const lineY = x => Math.round(78 - (x - 62) * 0.63);

document.getElementById("tiles").innerHTML = curves.map((c, i) => {
  const y = lineY(c.at);
  return `<div class="tile ${c.pink ? "pink" : ""}"><svg viewBox="1 1 177 112" font-size="11">
    <clipPath id="clip${i}"><rect x="62" y="16" width="98" height="64"/></clipPath>
    <text class="head" x="3" y="13">${c.t}</text>
    ${c.e ? `<text x="42" y="31" text-anchor="end">x10</text><text class="exp" x="54" y="28" text-anchor="end">${c.e}</text>` : ""}
    <text x="57" y="83" text-anchor="end">0</text>
    <text transform="translate(12 48) rotate(-90)" text-anchor="middle">Ratio</text>
    <path d="M61.500 17v66M57 78.500h5M61 79.500h99" stroke="#000"/>
    <g clip-path="url(#clip${i})" fill="#222">${c.q.map((s, k) => `<text x="66" y="${30 + k * 16}">${s}</text>`).join("")}</g>
    <path d="M62 78 160 17" stroke="#000"/>
    <path d="M62 ${y}.500H${c.at}.500V79" fill="none" stroke="#000" stroke-dasharray="4 2"/>
    ${c.p.map(x => `<circle cx="${x}" cy="${lineY(x)}" r="1.500" fill="#11c"/>`).join("")}
    <circle cx="${c.at}" cy="${y}" r="2" fill="none" stroke="#22a"/>
    ${c.m.map(m => `<text x="${m[1]}" y="${m[2]}" fill="#222">${m[0]}</text>`).join("")}
    <text x="111" y="109" text-anchor="middle">Conc(ppb)</text>
  </svg></div>`;
}).join("");

// ---- periodic table: symbol, optional heat level ----
const table = [
  "H . . . . . . . . . . . . . . . . He",
  "Li1 Be1 . . . . . . . . . . B1 C1 N5 O F Ne",
  "Na4 Mg4 . . . . . . . . . . Al4 Si1 P1 S1 Cl1 Ar",
  "K4 Ca1 Sc Ti1 V2 Cr4 Mn3 Fe4 Co2 Ni2 Cu3 Zn3 Ga1 Ge As2 Se1 Br1 Kr",
  "Rb1 Sr1 Y1 Zr1 Nb1 Mo1 Tc Ru1 Rh Pd1 Ag1 Cd1 In Sn1 Sb3 Te1 I1 Xe",
  "Cs1 Ba2 *L Hf1 Ta1 W1 Re1 Os1 Ir Pt1 Au1 Hg1 Tl1 Pb3 Bi Po At Rn",
  "Fr Ra *A . . . . . . . . . . . . . . .",
  ". . *L La1 Ce1 Pr1 Nd1 Pm Sm1 Eu1 Gd1 Tb Dy1 Ho1 Er1 Tm1 Yb1 Lu",
  ". . *A Ac Th2 Pa U1 Np Pu Am Cm Bk Cf Es Fm Md No Lr"
];

document.getElementById("periodic").innerHTML = table.join(" ").split(" ").map(s => {
  if (s === ".") return "<span></span>";
  if (s[0] === "*") return `<span class="series">${s[1]}</span>`;
  const heat = s.match(/\d/);
  return `<span class="el ${heat ? "h" + heat[0] : ""}">${s.replace(/\d/, "")}</span>`;
}).join("");
```
